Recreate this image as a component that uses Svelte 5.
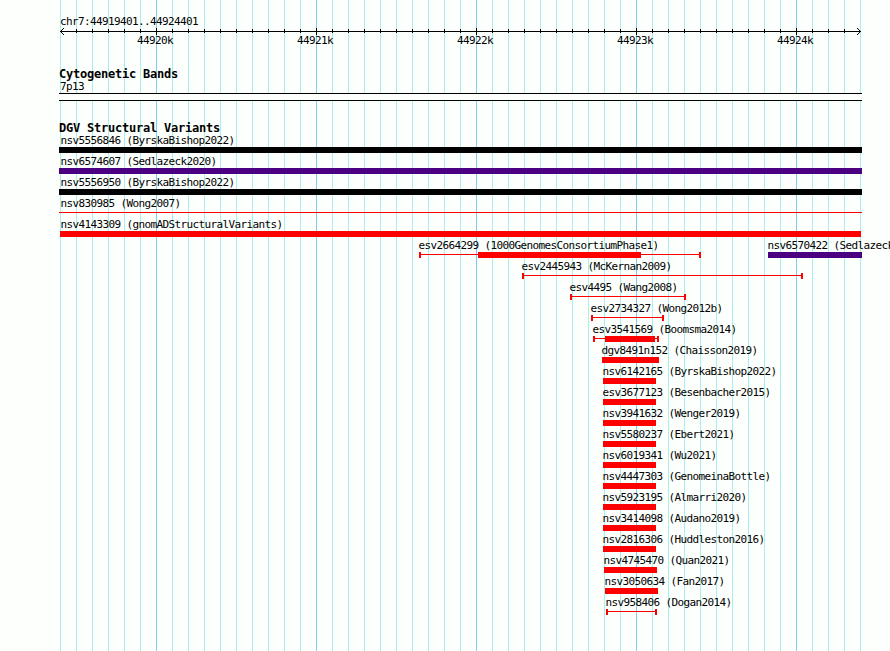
<script>
    const width = 890;
    const left = 60;
    const right = 860;
    const minor_step = 16;

    const ticks = Array.from({length: 51}, (_, i) => {
        return {x: left + i * minor_step, major: i % 10 === 6};
    });

    const axis_labels = [
        {x: 137, text: "44920k"},
        {x: 297, text: "44921k"},
        {x: 457, text: "44922k"},
        {x: 617, text: "44923k"},
        {x: 777, text: "44924k"},
    ];

    // range: thin line, caps: line ends are marked, box: thick part
    const lanes = [
        [{name: "nsv5556846 (ByrskaBishop2022)", label: 60, box: [59, 862], color: "black"}],
        [{name: "nsv6574607 (Sedlazeck2020)", label: 60, box: [59, 862], color: "indigo"}],
        [{name: "nsv5556950 (ByrskaBishop2022)", label: 60, box: [59, 862], color: "black"}],
        [{name: "nsv830985 (Wong2007)", label: 60, range: [59, 862]}],
        [{name: "nsv4143309 (gnomADStructuralVariants)", label: 60, box: [60, 861]}],
        [
            {name: "esv2664299 (1000GenomesConsortiumPhase1)", label: 418, range: [419, 701], caps: true, box: [478, 641]},
            {name: "nsv6570422 (Sedlazeck2020)", label: 767, box: [768, 862], color: "indigo"},
        ],
        [{name: "esv2445943 (McKernan2009)", label: 521, range: [522, 803], caps: true}],
        [{name: "esv4495 (Wang2008)", label: 569, range: [570, 686], caps: true}],
        [{name: "esv2734327 (Wong2012b)", label: 590, range: [591, 664], caps: true}],
        [{name: "esv3541569 (Boomsma2014)", label: 592, range: [593, 659], caps: true, box: [605, 655]}],
        [{name: "dgv8491n152 (Chaisson2019)", label: 601, box: [602, 659]}],
        [{name: "nsv6142165 (ByrskaBishop2022)", label: 602, box: [603, 656]}],
        [{name: "esv3677123 (Besenbacher2015)", label: 602, box: [603, 656]}],
        [{name: "nsv3941632 (Wenger2019)", label: 602, box: [603, 656]}],
        [{name: "nsv5580237 (Ebert2021)", label: 602, box: [603, 656]}],
        [{name: "nsv6019341 (Wu2021)", label: 602, box: [603, 656]}],
        [{name: "nsv4447303 (GenomeinaBottle)", label: 602, box: [603, 656]}],
        [{name: "nsv5923195 (Almarri2020)", label: 602, box: [603, 656]}],
        [{name: "nsv3414098 (Audano2019)", label: 602, box: [603, 656]}],
        [{name: "nsv2816306 (Huddleston2016)", label: 602, box: [603, 656]}],
        [{name: "nsv4745470 (Quan2021)", label: 603, box: [604, 657]}],
        [{name: "nsv3050634 (Fan2017)", label: 604, box: [605, 658]}],
        [{name: "nsv958406 (Dogan2014)", label: 605, range: [606, 657], caps: true}],
    ];
</script>

<div class="browser">
    <svg class="gridlines" {width} height="651">
        {#each ticks as tick}
            <rect class:major={tick.major} x={tick.x} y="0" width="1" height="651" />
        {/each}
    </svg>

    <svg class="scale" {width} height="68">
        <text x="60" y="25">chr7:44919401..44924401</text>
        <rect x={left} y="31" width={right - left + 1} height="1" />
        <path d="M64 28 L60.5 31.5 L64 35 M857 28 L860.5 31.5 L857 35" />
        {#each ticks.slice(1, -1) as tick}
            <rect x={tick.x} y={tick.major ? 28 : 29} width="1" height={tick.major ? 7 : 4} />
        {/each}
        {#each axis_labels as label}
            <text x={label.x} y="44">{label.text}</text>
        {/each}
    </svg>

    <h2>Cytogenetic Bands</h2>
    <svg class="cytoband" {width} height="41">
        <text x="60" y="9">7p13</text>
        <rect class="band" x="59" y="13" width="803" height="6" />
        <rect x="59" y="12" width="803" height="1" />
        <rect x="59" y="19" width="803" height="1" />
    </svg>

    <h2 class="variants">DGV Structural Variants</h2>
    {#each lanes as lane}
        <svg class="lane" {width} height="21">
            {#each lane as feature}
                <g class={feature.color ?? "red"}>
                    {#if feature.range}
                        <rect x={feature.range[0]} y="15" width={feature.range[1] - feature.range[0]} height="1" />
                    {/if}
                    {#if feature.caps}
                        <rect x={feature.range[0]} y="13" width="2" height="6" />
                        <rect x={feature.range[1] - 2} y="13" width="2" height="6" />
                    {/if}
                    {#if feature.box}
                        <rect x={feature.box[0]} y="13" width={feature.box[1] - feature.box[0]} height="6" />
                    {/if}
                </g>
                <text x={feature.label + 0.4} y="10">{feature.name}</text>
            {/each}
        </svg>
    {/each}
</div>

<style>
    :global(body) {
        margin: 0;
        background: #fdfffc;
    }
    .browser {
        position: relative;
        width: 890px;
        height: 651px;
        overflow: hidden;
        color: #000;
        font-family: "DejaVu Sans Mono", monospace;
    }
    svg {
        display: block;
        position: relative;
        shape-rendering: crispEdges;
    }
    .gridlines {
        position: absolute;
        top: 0;
        left: 0;
    }
    .gridlines rect {
        fill: #a6f0ef;
    }
    .gridlines rect.major {
        fill: #80cdee;
    }
    text {
        font-size: 11px;
        letter-spacing: -0.622px;
        white-space: pre;
    }
    path {
        fill: none;
        stroke: #000;
    }
    h2 {
        position: relative;
        margin: 0;
        padding-left: 59px;
        height: 13px;
        font-size: 12px;
        line-height: 13px;
        letter-spacing: -0.224px;
    }
    h2.variants {
        height: 12px;
    }
    .band {
        fill: #fdfffc;
    }
    .black {
        fill: #000;
    }
    .indigo {
        fill: #4b0082;
    }
    .red {
        fill: #f00;
    }
</style>
